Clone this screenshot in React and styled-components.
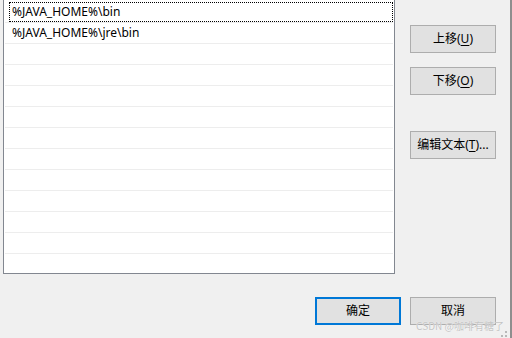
import styled, { createGlobalStyle } from 'styled-components'

const GlobalStyle = createGlobalStyle`
  html, body {
    margin: 0;
    padding: 0;
    background: #f0f0f0;
  }
  body {
    font-family: "Noto Sans", "Noto Sans CJK SC", sans-serif;
    font-size: 12px;
    color: #000;
  }
`

const Window = styled.div`
  position: relative;
  box-sizing: border-box;
  width: 512px;
  height: 338px;
  padding: 0 14px 0 3px;
  background: #f0f0f0;
  border-right: 2px solid #8e8e8e;
  display: flex;
  flex-direction: column;
  overflow: hidden;
`

const TopRow = styled.div`
  display: flex;
  height: 274px;
`

const ListBox = styled.div`
  box-sizing: border-box;
  width: 392px;
  height: 274px;
  padding-top: 2px;
  background: #fff;
  border: 1px solid #828790;
  border-top: none;
  overflow: hidden;
`

const Row = styled.div`
  position: relative;
  box-sizing: border-box;
  height: 21px;
  margin: 0 1px;
  padding-left: 7px;
  border-bottom: 1px solid #ededed;
  display: flex;
  align-items: center;
  white-space: nowrap;
  line-height: 1;

  ${(p) =>
    p.$focused &&
    `
    &::after {
      content: '';
      position: absolute;
      left: 4px;
      right: 0;
      top: 0;
      bottom: 0;
      border: 1px dotted #000;
    }
  `}
`

const SideColumn = styled.div`
  margin-left: 15px;
  padding-top: 25px;
  display: flex;
  flex-direction: column;
  width: 86px;
`

const Button = styled.button`
  box-sizing: border-box;
  width: 86px;
  height: 28px;
  margin: 0;
  margin-top: ${(p) => p.$gap || 0}px;
  padding: 0;
  background: #e1e1e1;
  border: ${(p) => (p.$default ? '2px solid #0078d7' : '1px solid #adadad')};
  font-family: "Noto Sans", "Noto Sans CJK SC", sans-serif;
  font-size: 12px;
  color: #000;
  line-height: 1;

  u {
    text-decoration: underline;
    text-underline-offset: 2px;
  }
`

const BottomRow = styled.div`
  margin-top: 23px;
  display: flex;
  justify-content: flex-end;
  gap: 9px;
`

const Watermark = styled.div`
  position: absolute;
  right: 6px;
  bottom: 5px;
  font-family: "Noto Sans CJK SC", sans-serif;
  font-size: 10px;
  color: #c4c4c4;
  text-shadow: 0 0 1px #fff;
  white-space: nowrap;
`

const Grip = styled.svg`
  position: absolute;
  right: 3px;
  bottom: 1px;
`

const paths = ['%JAVA_HOME%\\bin', '%JAVA_HOME%\\jre\\bin']

function App() {
  const rows = Array.from({ length: 12 }, (_, i) => paths[i] || '')

  return (
    <>
      <GlobalStyle />
      <Window>
        <TopRow>
          <ListBox>
            {rows.map((text, i) => (
              <Row key={i} $focused={i === 0}>
                {text}
              </Row>
            ))}
          </ListBox>
          <SideColumn>
            <Button type="button">
              上移(<u>U</u>)
            </Button>
            <Button type="button" $gap={14}>
              下移(<u>O</u>)
            </Button>
            <Button type="button" $gap={36}>
              编辑文本(<u>T</u>)...
            </Button>
          </SideColumn>
        </TopRow>
        <BottomRow>
          <Button type="button" $default>
            确定
          </Button>
          <Button type="button">取消</Button>
        </BottomRow>
        <Watermark>CSDN @咖啡有糖了</Watermark>
        <Grip width="6" height="6" viewBox="0 0 6 6">
          <rect x="4" y="0" width="2" height="2" fill="#b8b8b8" />
          <rect x="0" y="4" width="2" height="2" fill="#b8b8b8" />
          <rect x="4" y="4" width="2" height="2" fill="#b8b8b8" />
        </Grip>
      </Window>
    </>
  )
}

export default App
